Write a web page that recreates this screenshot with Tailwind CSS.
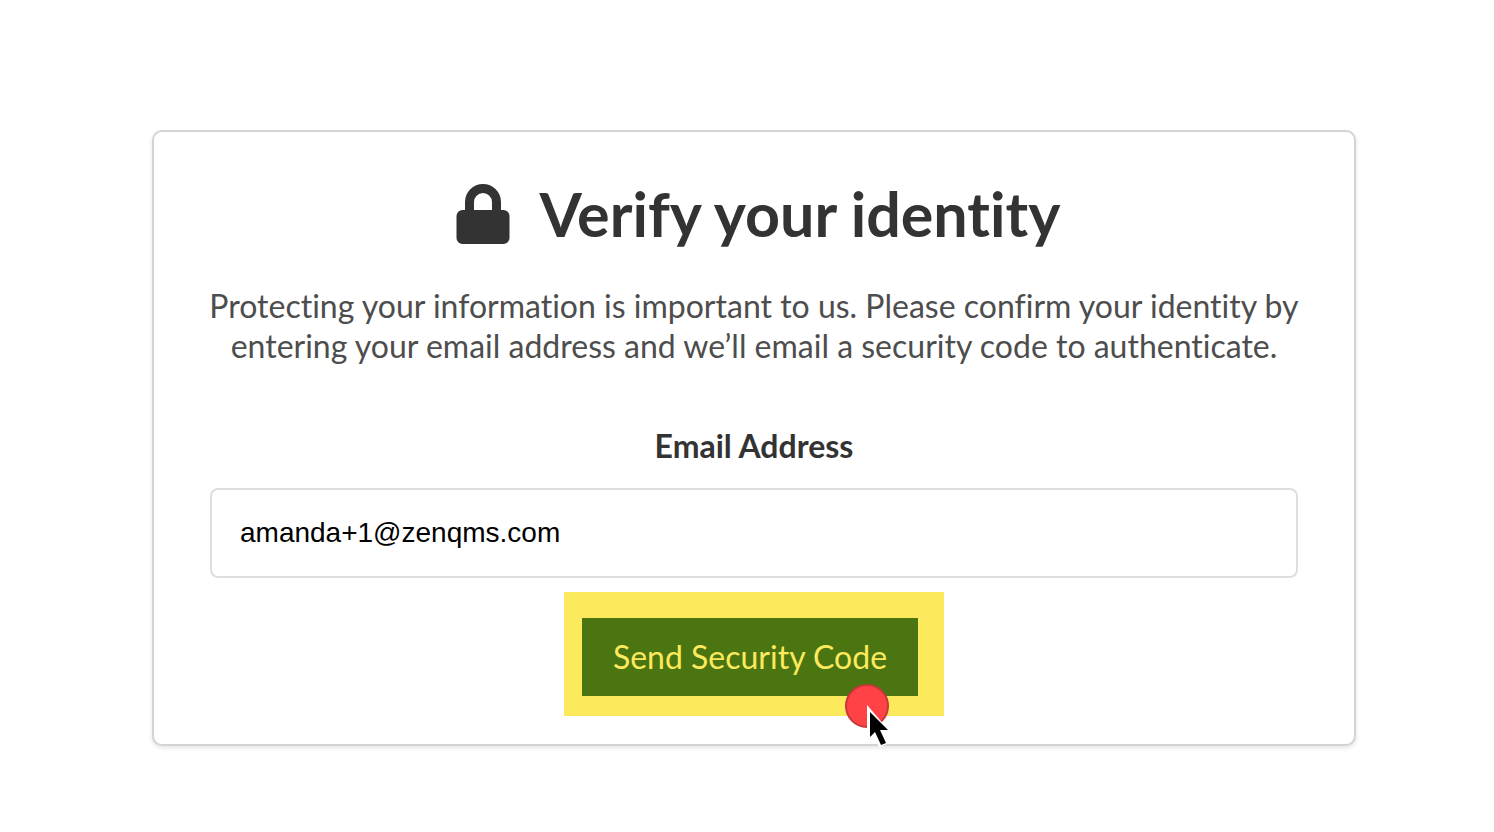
<!DOCTYPE html>
<html lang="en">
<head>
    <meta charset="UTF-8">
    <meta name="viewport" content="width=device-width, initial-scale=1.0">
    <title>Verify your identity</title>
    <!-- Tailwind CSS for styling -->
    <script src="https://cdn.jsdelivr.net/npm/@tailwindcss/browser@4"></script>
</head>
<body class="bg-white text-[#333333] font-['Lato',sans-serif] [font-variant-ligatures:none]">
    <main class="pt-[130px] pb-20 pl-[152px] pr-[138px]">
        <form class="flex flex-col items-center rounded-[10px] border-2 border-[#d4d4d5] bg-white px-14 pt-[46px] pb-7 shadow-[0_2px_4px_rgba(34,36,38,0.12)]">

            <!-- Title -->
            <h1 class="flex items-center gap-[30px] pl-2 text-[61px] leading-[72px] font-bold">
                <svg class="h-[60px] w-[54px]" viewBox="0 0 54 60" fill="#333333" aria-hidden="true">
                    <path fill-rule="evenodd" d="M9 26V18a18 18 0 0 1 36 0v8h2.500a6 6 0 0 1 6 6v22a6 6 0 0 1-6 6h-41a6 6 0 0 1-6-6V32a6 6 0 0 1 6-6H9zM18 26h18v-8a9 9 0 0 0-18 0v8z"/>
                </svg>
                Verify your identity
            </h1>

            <p class="-mx-2 mt-9 self-stretch text-center text-[32px] leading-10 text-[#4d4d4d]">Protecting your information is important to us. Please confirm your identity by entering your email address and we’ll email a security code to authenticate.</p>

            <!-- Email field -->
            <label for="email" class="mt-[60px] text-[32px] leading-10 font-bold">Email Address</label>
            <input type="email" id="email" value="amanda+1@zenqms.com" class="mt-[22px] h-[90px] w-full rounded-lg border-2 border-[#dededf] bg-white px-7 text-[28px] text-black font-['Liberation_Sans',sans-serif]">

            <!-- Highlighted submit button -->
            <div class="relative mt-3.5 bg-[#fce95c] pt-[26px] pr-[26px] pb-5 pl-[18px]">
                <button type="button" class="block bg-[#4b7511] px-[31px] py-[19px] text-[32px] leading-10 text-[#fce95c]">Send Security Code</button>
                <!-- Click marker and cursor -->
                <svg class="pointer-events-none absolute right-[51px] -bottom-8 h-16 w-12" viewBox="0 0 48 64" aria-hidden="true">
                    <circle cx="22" cy="22" r="21" fill="#ff4246" stroke="#c6373b" stroke-width="2"/>
                    <path d="M22 21v38l7-6 5 10 8-3-5-10h10z" fill="#fff"/>
                    <path d="M25 28v25l5-5 6 13 5-2-6-13h8z" fill="#000"/>
                </svg>
            </div>
        </form>
    </main>
</body>
</html>
